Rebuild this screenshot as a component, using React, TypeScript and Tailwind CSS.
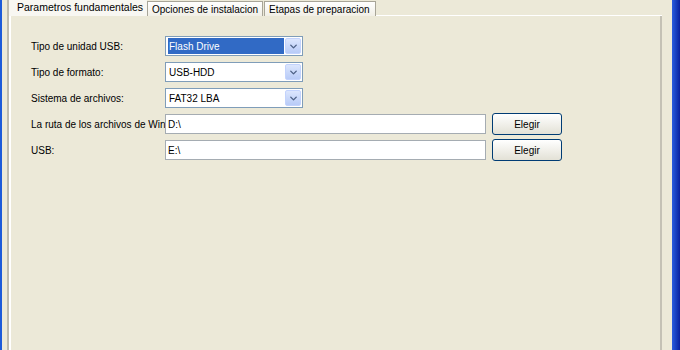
import { ChevronDown } from 'lucide-react'

const tabs = ['Parametros fundamentales', 'Opciones de instalacion', 'Etapas de preparacion']

function Select({ value, selected }: { value: string; selected?: boolean }) {
    return <div className="flex items-center w-[138px] h-[20px] bg-white border border-[#7f9db9] p-[1px]">
        <div className="flex-1 h-full flex items-center pl-[1px]">
            <span className={selected ? 'bg-[#316ac5] text-white w-full h-full flex items-center pl-[1px]' : 'pl-[1px]'}>
                {value}
            </span>
        </div>
        <div className="w-[16px] h-full ml-[1px] flex items-center justify-center rounded-[2px] bg-gradient-to-b from-[#dce6fd] to-[#b8cbf7] border border-[#c3d3fd]">
            <ChevronDown size={11} strokeWidth={3} className="text-[#4d6185]" />
        </div>
    </div>
}

function PathRow({ label, value }: { label: string; value: string }) {
    return <div className="flex items-center h-[26px]">
        <div className="w-[134px] overflow-hidden whitespace-nowrap">{label}</div>
        <div className="w-[321px] h-[20px] bg-white border border-[#a5acb2] flex items-center pl-[2px]">
            {value}
        </div>
        <button className="ml-[6px] w-[70px] h-[22px] rounded-[3px] border border-[#003c74] bg-gradient-to-b from-white to-[#e3e1d6] flex items-center justify-center">
            Elegir
        </button>
    </div>
}

export default function App() {
    return <div className="flex w-[680px] h-[350px] bg-[#ece9d8] text-black text-[10px] font-['Liberation_Sans',Arial,sans-serif] overflow-hidden">
        <div className="w-[2px] bg-[#1c5ad9]" />

        <div className="flex-1 flex flex-col pl-[5px] pr-[10px]">
            <div className="h-[16px] flex items-end whitespace-nowrap">
                <div className="w-[140px] h-full text-[10.5px] bg-[#f8f7f2] border-l-[2px] border-[#bdbaae] pl-[8px] flex items-center">
                    {tabs[0]}
                </div>
                <div className="w-[116px] h-[15px] overflow-hidden bg-gradient-to-b from-white to-[#f1efe6] border border-b-0 border-[#a8a598] pl-[4px] flex items-center">
                    {tabs[1]}
                </div>
                <div className="w-[112px] h-[15px] overflow-hidden ml-[1px] bg-gradient-to-b from-white to-[#f1efe6] border border-b-0 border-[#a8a598] pl-[4px] flex items-center">
                    {tabs[2]}
                </div>
                <div className="flex-1 border-b border-white" />
            </div>

            <div className="flex-1 flex border-l-[2px] border-r-[2px] border-l-[#bdbaae] border-r-[#c4c1b5]">
                <div className="flex-1 flex flex-col border-l-[2px] border-white pl-[20px] pt-[17px]">
                    <div className="flex items-center h-[26px]">
                        <div className="w-[134px]">Tipo de unidad USB:</div>
                        <Select value="Flash Drive" selected />
                    </div>
                    <div className="flex items-center h-[26px]">
                        <div className="w-[134px]">Tipo de formato:</div>
                        <Select value="USB-HDD" />
                    </div>
                    <div className="flex items-center h-[26px]">
                        <div className="w-[134px]">Sistema de archivos:</div>
                        <Select value="FAT32 LBA" />
                    </div>
                    <PathRow label="La ruta de los archivos de Win" value="D:\" />
                    <PathRow label="USB:" value="E:\" />
                </div>
            </div>
        </div>

        <div className="w-[8px] bg-gradient-to-r from-[#2a5ce0] to-[#0a1f9e]" />
    </div>
}
